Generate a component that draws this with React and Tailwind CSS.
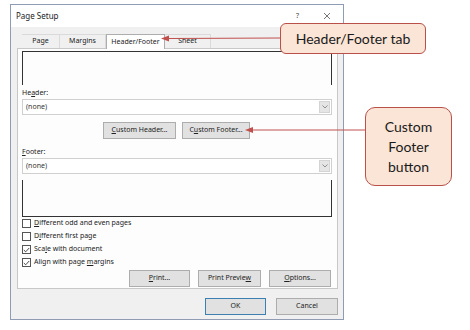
import React from 'react';

const ui = { fontFamily: '"Noto Sans", "Open Sans", sans-serif' };
const note = { fontFamily: 'Lato, "Liberation Sans", sans-serif' };

function Btn({ children, className = '' }) {
  return (
    <div className={`h-[17px] flex items-center justify-center bg-[#e1e1e1] border border-[#adadad] text-[7px] text-[#222] ${className}`}>
      {children}
    </div>
  );
}

function Select() {
  return (
    <div className="h-[16px] bg-white border border-[#d0d0d0] flex items-center">
      <span className="flex-1 pl-[3px] text-[7px] text-[#333]">(none)</span>
      <div className="w-[11px] h-[12px] mr-[1px] bg-[#e5e5e5] border border-[#d4d4d4] flex items-center justify-center">
        <svg width="6" height="4" viewBox="0 0 6 4">
          <path d="M0.5 0.5 L3 3 L5.5 0.5" fill="none" stroke="#777" strokeWidth="0.8" />
        </svg>
      </div>
    </div>
  );
}

function Check({ checked, children }) {
  return (
    <div className="h-[13px] flex items-center gap-[3px]">
      <div className="w-[9px] h-[9px] bg-white border border-[#555] flex items-center justify-center">
        {checked && (
          <svg width="7" height="6" viewBox="0 0 7 6">
            <path d="M0.8 3 L2.7 4.8 L6.2 1" fill="none" stroke="#333" strokeWidth="0.9" />
          </svg>
        )}
      </div>
      <span className="text-[7px] text-[#222]">{children}</span>
    </div>
  );
}

const tabs = [
  { label: 'Page', w: 'w-[38px]' },
  { label: 'Margins', w: 'w-[46px]' },
  { label: 'Header/Footer', w: 'w-[59px]', active: true },
  { label: 'Sheet', w: 'w-[46px]' },
];

export default function App() {
  return (
    <div className="relative w-[470px] h-[330px] bg-white overflow-hidden" style={ui}>
      <div className="ml-[10px] mt-[4px] w-[334px] h-[316px] border border-[#8f9cb3] bg-[#f0f0f0] flex flex-col">
        <div className="h-[22px] bg-white flex items-center pl-[5px] pr-[12px]">
          <span className="flex-1 text-[8px] text-[#222]">Page Setup</span>
          <span className="text-[7px] text-[#444] mr-[24px]">?</span>
          <svg width="8" height="8" viewBox="0 0 8 8">
            <path d="M1 1 L7 7 M7 1 L1 7" stroke="#555" strokeWidth="0.8" />
          </svg>
        </div>

        <div className="flex pl-[11px] mt-[6px] h-[15px] items-end">
          {tabs.map((t) => (
            <div
              key={t.label}
              className={`${t.w} flex items-center justify-center text-[7px] text-[#222] ${
                t.active
                  ? 'h-[15px] bg-white border border-b-0 border-[#adadad] relative top-[1px]'
                  : 'h-[14px] bg-[#f0f0f0] border-t border-r border-[#dadada]'
              }`}
            >
              {t.label}
            </div>
          ))}
        </div>

        <div className="ml-[6px] w-[321px] h-[241px] bg-[#fdfdfd] border border-[#c8c8c8] px-[4px] pt-[2px] flex flex-col">
          <div className="h-[34px] w-[310px] border-t border-l border-r border-[#333]" />
          <div className="mt-[3px] h-[11px] text-[7px] text-[#222]">
            He<u>a</u>der:
          </div>
          <div className="w-[310px]"><Select /></div>
          <div className="flex gap-[6px] pl-[81px] mt-[7px]">
            <Btn className="w-[73px]"><u>C</u>ustom Header...</Btn>
            <Btn className="w-[68px]">C<u>u</u>stom Footer...</Btn>
          </div>
          <div className="mt-[8px] h-[11px] text-[7px] text-[#222]">
            <u>F</u>ooter:
          </div>
          <div className="w-[310px]"><Select /></div>
          <div className="mt-[6px] h-[37px] w-[310px] border-l border-r border-b border-[#333]" />
          <div className="flex flex-col">
            <Check><u>D</u>ifferent odd and even pages</Check>
            <Check>D<u>i</u>fferent first page</Check>
            <Check checked>Sca<u>l</u>e with document</Check>
            <Check checked>Align with page <u>m</u>argins</Check>
          </div>
          <div className="flex justify-end gap-[8px] pr-[2px] mt-[1px]">
            <Btn className="w-[61px]"><u>P</u>rint...</Btn>
            <Btn className="w-[63px]">Print Previe<u>w</u></Btn>
            <Btn className="w-[62px]"><u>O</u>ptions...</Btn>
          </div>
        </div>

        <div className="flex justify-end gap-[10px] pr-[5px] mt-[9px]">
          <Btn className="w-[61px] !border-[#3c7fb1] !border-[1.5px]">OK</Btn>
          <Btn className="w-[62px]">Cancel</Btn>
        </div>
      </div>

      <svg className="absolute left-0 top-0 pointer-events-none" width="470" height="330">
        <line x1="280" y1="38" x2="167" y2="38.5" stroke="#c0504d" strokeWidth="1" />
        <path d="M161 38.5 L169 35.5 L169 41.5 Z" fill="#c0504d" />
        <line x1="365" y1="130" x2="251" y2="130" stroke="#c0504d" strokeWidth="1" />
        <path d="M245 130 L253 127 L253 133 Z" fill="#c0504d" />
      </svg>

      <div
        className="absolute left-[280px] top-[23px] w-[146px] h-[31px] rounded-[6px] bg-[#fbe5d6] border border-[#b9504a] flex items-center justify-center text-[14px] text-[#1a1a1a]"
        style={note}
      >
        Header/Footer tab
      </div>
      <div
        className="absolute left-[365px] top-[107px] w-[87px] h-[79px] rounded-[10px] bg-[#fbe5d6] border border-[#b9504a] flex flex-col items-center justify-center text-[14px] leading-[20px] text-[#1a1a1a]"
        style={note}
      >
        <span>Custom</span>
        <span>Footer</span>
        <span>button</span>
      </div>
    </div>
  );
}
